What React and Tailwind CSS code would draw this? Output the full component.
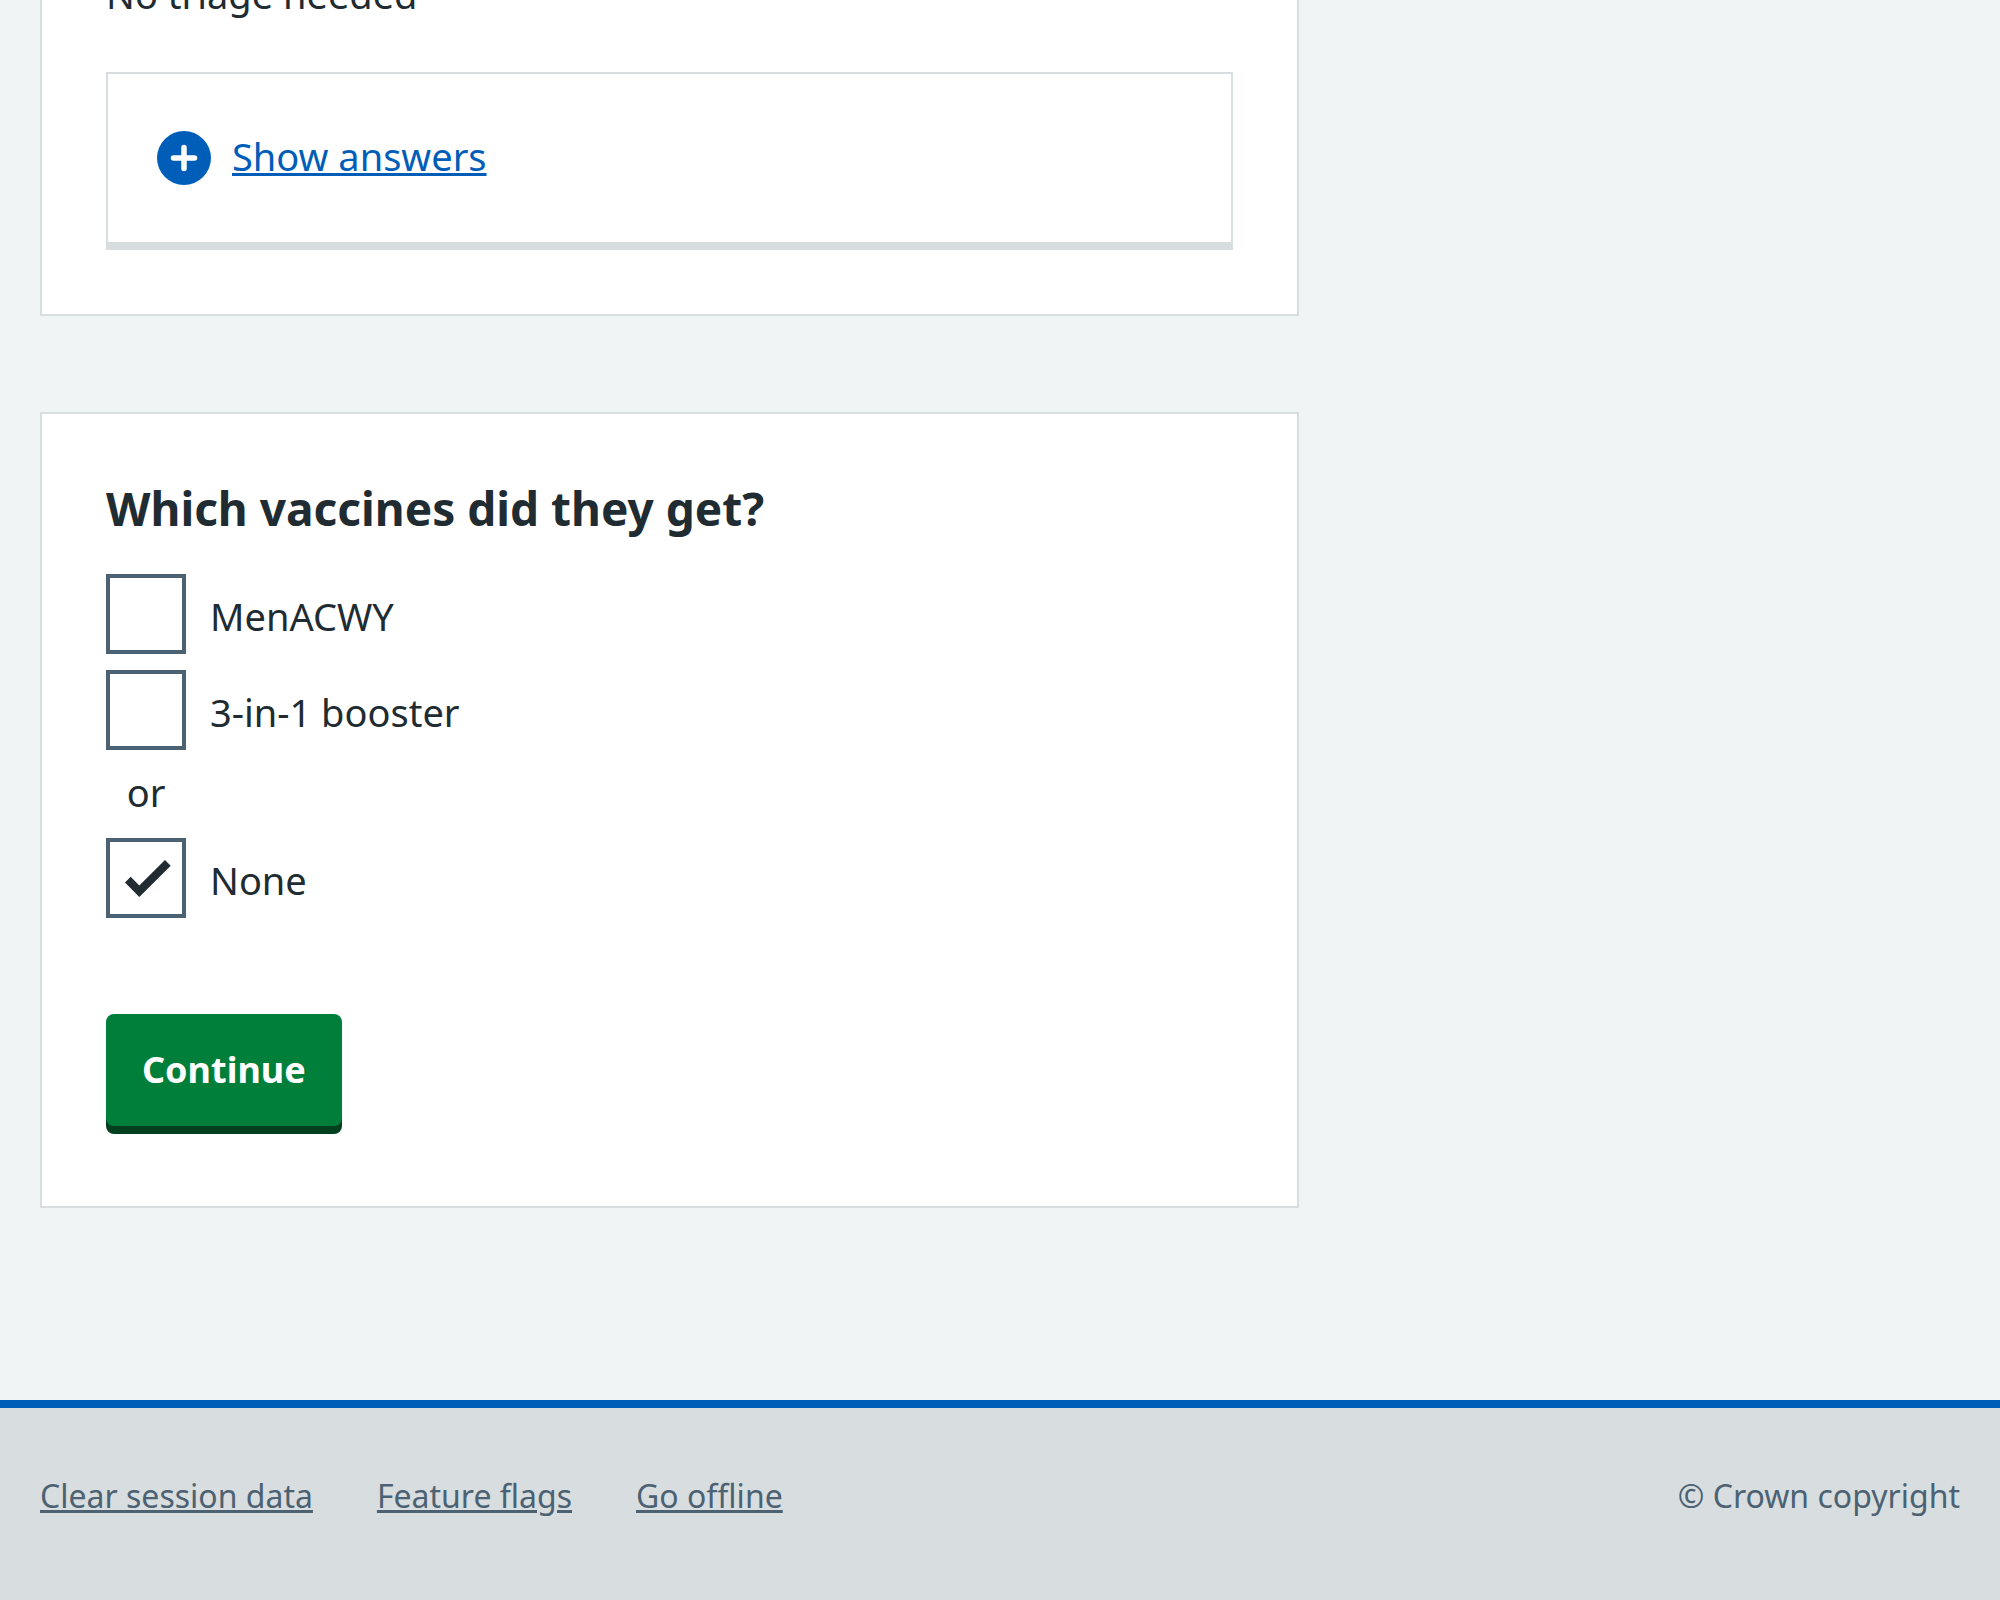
const vaccines = [
  { id: "menacwy", label: "MenACWY" },
  { id: "booster", label: "3-in-1 booster" },
];

const footerLinks = ["Clear session data", "Feature flags", "Go offline"];

function PlusIcon() {
  return (
    <svg viewBox="0 0 56 56" className="size-14 shrink-0" aria-hidden="true">
      <circle cx="28" cy="28" r="27" fill="#005eb8" />
      <path d="M17.5 28h21M28 17.5v21" stroke="#fff" strokeWidth="5.5" strokeLinecap="round" />
    </svg>
  );
}

function Checkbox({ id, label, defaultChecked }) {
  return (
    <div className="flex items-start gap-6">
      <span className="grid size-20 shrink-0">
        <input
          id={id}
          type="checkbox"
          defaultChecked={defaultChecked}
          className="peer col-start-1 row-start-1 size-20 appearance-none border-4 border-[#4c6272] bg-white"
        />
        <svg
          viewBox="0 0 80 80"
          className="pointer-events-none col-start-1 row-start-1 hidden size-20 peer-checked:block"
          aria-hidden="true"
        >
          <path d="M19 44.5 24.7 38.8 33.3 47.5 59 22 64.7 27.7 33.3 59Z" fill="#212b32" />
        </svg>
      </span>
      <label htmlFor={id} className="pt-4">
        {label}
      </label>
    </div>
  );
}

export default function App() {
  return (
    <div className="flex min-h-screen flex-col overflow-hidden bg-[#f0f4f5] font-['Noto_Sans',sans-serif] text-[38px] leading-[52px] text-[#212b32]">
      <main className="grid grid-cols-3 gap-x-16 px-10 pb-48">
        <div className="col-span-2 flex flex-col gap-24">
          <section className="border-2 border-t-0 border-[#d8dde0] bg-white px-16 pb-16">
            <p className="-mt-8 mb-[52px]">No triage needed</p>
            <div className="border-2 border-b-8 border-[#d8dde0] bg-white px-12 py-14">
              <button type="button" className="flex items-start gap-5 text-[#005eb8]">
                <PlusIcon />
                <span className="underline decoration-3 underline-offset-2">Show answers</span>
              </button>
            </div>
          </section>

          <form
            className="border-2 border-[#d8dde0] bg-white px-16 pt-16 pb-20"
            onSubmit={(event) => event.preventDefault()}
          >
            <fieldset>
              <legend className="mb-9 text-[46px] leading-[60px] font-bold">Which vaccines did they get?</legend>
              <div className="flex flex-col gap-4">
                {vaccines.map((vaccine) => (
                  <Checkbox key={vaccine.id} id={vaccine.id} label={vaccine.label} />
                ))}
                <div className="w-20 pb-1 text-center">or</div>
                <Checkbox id="none" label="None" defaultChecked />
              </div>
            </fieldset>
            <button
              type="submit"
              className="mt-24 rounded-lg bg-[#007f3b] px-9 py-[30px] text-[36px] leading-[52px] font-bold text-white shadow-[0_8px_0_#00401e]"
            >
              Continue
            </button>
          </form>
        </div>
      </main>

      <footer className="flex grow items-start justify-between border-t-8 border-[#005eb8] bg-[#d8dde0] px-10 pt-16 text-[32px] leading-[48px] text-[#4c6272]">
        <ul className="flex gap-16">
          {footerLinks.map((label) => (
            <li key={label}>
              <a href="#" className="underline decoration-3 underline-offset-2">
                {label}
              </a>
            </li>
          ))}
        </ul>
        <p>© Crown copyright</p>
      </footer>
    </div>
  );
}
